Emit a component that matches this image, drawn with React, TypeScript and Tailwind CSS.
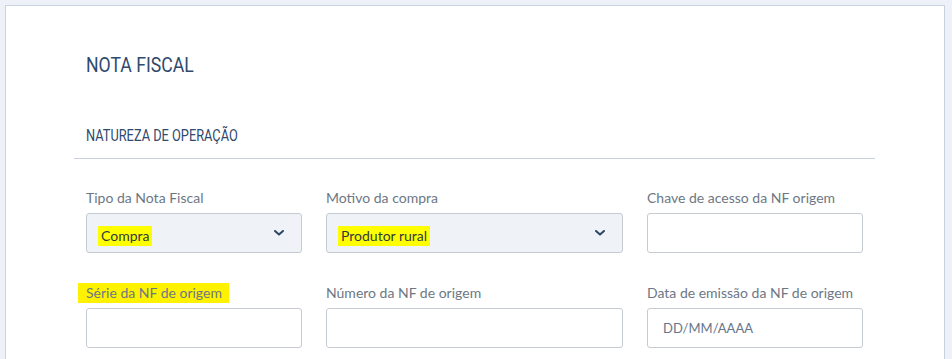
import { useState } from 'react';

const Chevron = () => (
  <svg width="10" height="6" viewBox="0 0 10 6" className="text-[#2d4566]">
    <path d="M1 1l4 3.6L9 1" fill="none" stroke="currentColor" strokeWidth="2" strokeLinecap="round" strokeLinejoin="round" />
  </svg>
);

const labelCls = "text-[14px] leading-[16px] text-[#6d7784] font-['Lato',sans-serif]";

const Select = ({ label, value, width }: { label: string; value: string; width: string }) => (
  <div className={`${width} flex flex-col`}>
    <label className={`${labelCls} mb-[7px]`}>{label}</label>
    <button className="h-[40px] w-full flex items-center justify-between rounded-[3px] border border-[#c6cbd1] bg-[#eff2f7] pl-[11px] pr-[17px]">
      <span className="mt-[6px] bg-[#ffff00] px-[3px] py-[2px] text-[14px] leading-[16px] text-[#2f3a44] font-['Lato',sans-serif]">{value}</span>
      <Chevron />
    </button>
  </div>
);

const Field = ({ label, placeholder, width, mark }: { label: string; placeholder?: string; width: string; mark?: boolean }) => {
  const [v, setV] = useState('');
  return (
    <div className={`${width} flex flex-col`}>
      {mark ? (
        <label className={`${labelCls} -ml-[8px] -mt-[2px] mb-[5px] self-start bg-[#fff200] pl-[8px] pr-[7px] py-[2px]`}>{label}</label>
      ) : (
        <label className={`${labelCls} mb-[7px]`}>{label}</label>
      )}
      <input
        value={v}
        onChange={(e) => setV(e.target.value)}
        placeholder={placeholder}
        className="h-[40px] w-full rounded-[3px] border border-[#c6cbd1] bg-white px-[15px] text-[13px] text-[#2f3a44] placeholder:text-[#66758a] outline-none font-['Lato',sans-serif]"
      />
    </div>
  );
};

const headCls = "inline-block origin-left text-[#2f4a6c] font-['Roboto',sans-serif] whitespace-nowrap";

export default function App() {
  return (
    <div className="min-h-screen bg-[#eef2f8] pt-[5px] pl-[5px] pr-[7px] overflow-hidden">
      <div className="h-[400px] bg-white border border-[#c9d3df] border-b-0">
        <div className="ml-[68px] w-[801px]">
          <h1 className="pl-[12px] pt-[45px] text-[21px] leading-[26px]">
            <span className={`${headCls} scale-x-[0.84]`}>NOTA FISCAL</span>
          </h1>
          <h2 className="pl-[12px] mt-[48px] pb-[13px] border-b border-[#c9d3df] text-[16px] leading-[18px]">
            <span className={`${headCls} scale-x-[0.8]`}>NATUREZA DE OPERAÇÃO</span>
          </h2>
          <div className="pl-[12px] pt-[31px] flex flex-col gap-[32px]">
            <div className="flex gap-[24px]">
              <Select label="Tipo da Nota Fiscal" value="Compra" width="w-[216px]" />
              <Select label="Motivo da compra" value="Produtor rural" width="w-[297px]" />
              <Field label="Chave de acesso da NF origem" width="w-[216px]" />
            </div>
            <div className="flex gap-[24px]">
              <Field label="Série da NF de origem" width="w-[216px]" mark />
              <Field label="Número da NF de origem" width="w-[297px]" />
              <Field label="Data de emissão da NF de origem" placeholder="DD/MM/AAAA" width="w-[216px]" />
            </div>
          </div>
        </div>
      </div>
    </div>
  );
}
